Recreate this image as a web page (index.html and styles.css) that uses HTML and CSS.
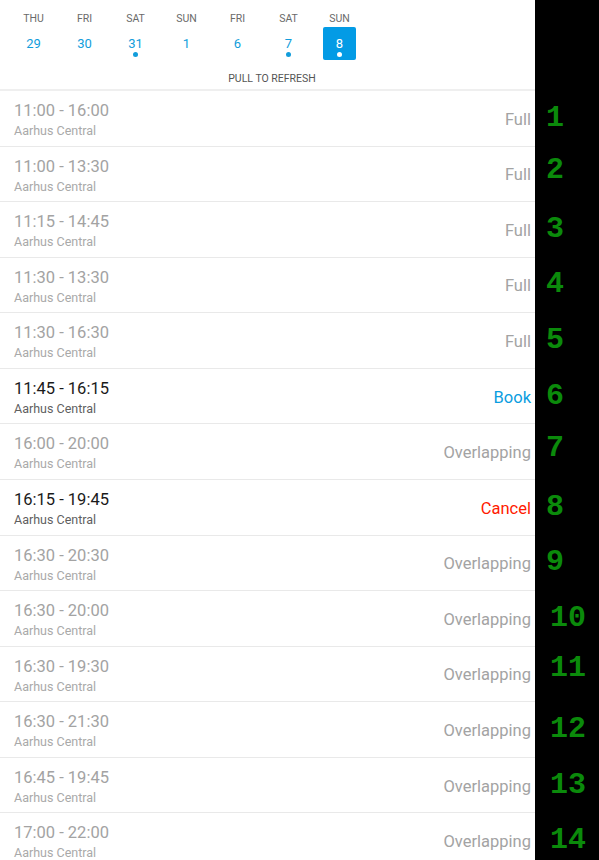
FILE: index.html
```html
<!DOCTYPE html>
<html>
<head>
<meta charset="utf-8">
<link rel="stylesheet" href="styles.css">
</head>
<body>
<div class="screen">
  <div class="head-row">
    <header class="panel head">
      <div class="days">
        <div class="day"><span class="dname">THU</span><span class="dnum">29</span></div>
        <div class="day"><span class="dname">FRI</span><span class="dnum">30</span></div>
        <div class="day"><span class="dname">SAT</span><span class="dnum dot">31</span></div>
        <div class="day"><span class="dname">SUN</span><span class="dnum">1</span></div>
        <div class="day"><span class="dname">FRI</span><span class="dnum">6</span></div>
        <div class="day"><span class="dname">SAT</span><span class="dnum dot">7</span></div>
        <div class="day"><span class="dname">SUN</span><span class="dnum dot sel">8</span></div>
      </div>
      <div class="refresh">PULL TO REFRESH</div>
    </header>
    <div class="gutter"></div>
  </div>

  <div class="row"><div class="panel item off"><div class="info"><div class="time">11:00 - 16:00</div><div class="loc">Aarhus Central</div></div><div class="status">Full</div></div><div class="gutter num">1</div></div>
  <div class="row"><div class="panel item off"><div class="info"><div class="time">11:00 - 13:30</div><div class="loc">Aarhus Central</div></div><div class="status">Full</div></div><div class="gutter num up">2</div></div>
  <div class="row"><div class="panel item off"><div class="info"><div class="time">11:15 - 14:45</div><div class="loc">Aarhus Central</div></div><div class="status">Full</div></div><div class="gutter num">3</div></div>
  <div class="row"><div class="panel item off"><div class="info"><div class="time">11:30 - 13:30</div><div class="loc">Aarhus Central</div></div><div class="status">Full</div></div><div class="gutter num">4</div></div>
  <div class="row"><div class="panel item off"><div class="info"><div class="time">11:30 - 16:30</div><div class="loc">Aarhus Central</div></div><div class="status">Full</div></div><div class="gutter num">5</div></div>
  <div class="row"><div class="panel item"><div class="info"><div class="time">11:45 - 16:15</div><div class="loc">Aarhus Central</div></div><div class="status book">Book</div></div><div class="gutter num">6</div></div>
  <div class="row"><div class="panel item off"><div class="info"><div class="time">16:00 - 20:00</div><div class="loc">Aarhus Central</div></div><div class="status">Overlapping</div></div><div class="gutter num up">7</div></div>
  <div class="row"><div class="panel item"><div class="info"><div class="time">16:15 - 19:45</div><div class="loc">Aarhus Central</div></div><div class="status cancel">Cancel</div></div><div class="gutter num">8</div></div>
  <div class="row"><div class="panel item off"><div class="info"><div class="time">16:30 - 20:30</div><div class="loc">Aarhus Central</div></div><div class="status">Overlapping</div></div><div class="gutter num">9</div></div>
  <div class="row"><div class="panel item off"><div class="info"><div class="time">16:30 - 20:00</div><div class="loc">Aarhus Central</div></div><div class="status">Overlapping</div></div><div class="gutter num two">10</div></div>
  <div class="row"><div class="panel item off"><div class="info"><div class="time">16:30 - 19:30</div><div class="loc">Aarhus Central</div></div><div class="status">Overlapping</div></div><div class="gutter num two upmore">11</div></div>
  <div class="row"><div class="panel item off"><div class="info"><div class="time">16:30 - 21:30</div><div class="loc">Aarhus Central</div></div><div class="status">Overlapping</div></div><div class="gutter num two">12</div></div>
  <div class="row"><div class="panel item off"><div class="info"><div class="time">16:45 - 19:45</div><div class="loc">Aarhus Central</div></div><div class="status">Overlapping</div></div><div class="gutter num two">13</div></div>
  <div class="row"><div class="panel item off"><div class="info"><div class="time">17:00 - 22:00</div><div class="loc">Aarhus Central</div></div><div class="status">Overlapping</div></div><div class="gutter num two">14</div></div>
</div>
</body>
</html>
```

FILE: styles.css
```css
html, body {
  margin: 0;
  padding: 0;
  background: #000;
  height: 860px;
  overflow: hidden;
}

.screen {
  display: flex;
  flex-direction: column;
  font-family: Roboto, "Liberation Sans", sans-serif;
}

.head-row,
.row {
  display: grid;
  grid-template-columns: 535px 64px;
}

.panel {
  background: #fff;
}

.head {
  height: 89px;
  border-bottom: 2px solid #efefef;
  display: flex;
  flex-direction: column;
}

.days {
  display: flex;
  padding-left: 8px;
  padding-top: 12px;
}

.day {
  width: 51px;
  display: flex;
  flex-direction: column;
  align-items: center;
}

.dname {
  font-size: 10.5px;
  line-height: 14px;
  color: #6a6a6a;
}

.dnum {
  margin-top: 1px;
  width: 33px;
  height: 33px;
  box-sizing: border-box;
  padding-top: 9px;
  text-align: center;
  font-size: 13px;
  line-height: 16px;
  color: #129ddb;
  border-radius: 2px;
  position: relative;
}

.dnum.dot::after {
  content: "";
  position: absolute;
  left: 14px;
  top: 25px;
  width: 5px;
  height: 5px;
  border-radius: 50%;
  background: #129ddb;
}

.dnum.sel {
  background: #039be5;
  color: #fff;
}

.dnum.sel::after {
  background: #fff;
}

.refresh {
  margin-top: 13px;
  text-align: center;
  padding-left: 9px;
  font-size: 10.5px;
  line-height: 12px;
  color: #555;
}

.item {
  height: 55.57px;
  box-sizing: border-box;
  border-bottom: 1px solid #e9e9e9;
  display: flex;
  align-items: center;
  justify-content: space-between;
  padding: 0 4px 0 14px;
}

.info {
  display: flex;
  flex-direction: column;
  align-self: flex-start;
  padding-top: 10px;
}

.time {
  font-size: 16.5px;
  line-height: 20px;
  color: #1a1a1a;
}

.loc {
  font-size: 12.5px;
  line-height: 15px;
  margin-top: 2px;
  color: #5f5f5f;
}

.off .time {
  color: #a3a3a3;
}

.off .loc {
  color: #a9a9a9;
}

.status {
  font-size: 16.5px;
  color: #a3a3a3;
  padding-top: 2px;
}

.status.book {
  color: #0a9de0;
}

.status.cancel {
  color: #ff1a00;
}

.gutter {
  background: #000;
}

.num {
  display: flex;
  align-items: center;
  padding-left: 11px;
  padding-bottom: 2px;
  font-family: "Liberation Mono", "Courier New", monospace;
  font-weight: bold;
  font-size: 30px;
  color: #0b8a0b;
}

.num.two {
  padding-left: 15px;
}

.num.up {
  padding-bottom: 8px;
}

.num.upmore {
  padding-bottom: 12px;
}
```
